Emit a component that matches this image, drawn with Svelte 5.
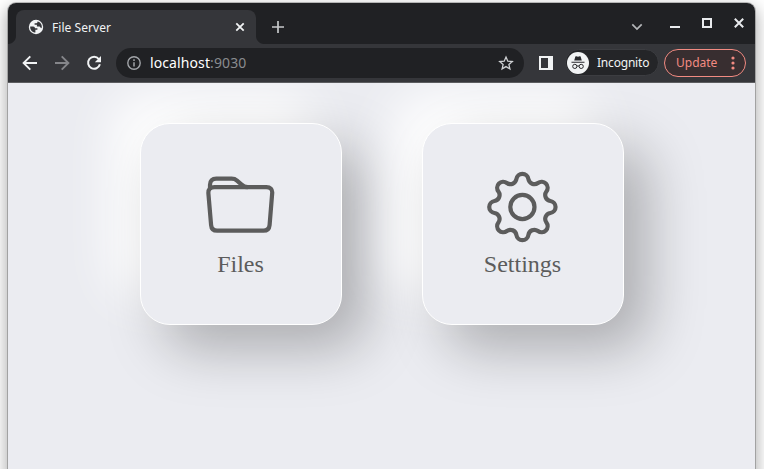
<script>
  const point = (radius, degrees) => {
    const a = (degrees * Math.PI) / 180;
    return [36 + radius * Math.sin(a), 36 - radius * Math.cos(a)];
  };
  const middle = (a, b) => `${((a[0] + b[0]) / 2).toFixed(2)} ${((a[1] + b[1]) / 2).toFixed(2)}`;
  const lobe = 27;
  const notch = 31.3;
  let gear = `M${middle(point(notch, -22.5), point(lobe, 0))}`;
  for (let i = 0; i < 8; i++) {
    const c = point(lobe, i * 45);
    const v = point(notch, i * 45 + 22.5);
    const n = point(lobe, i * 45 + 45);
    gear += `A6.05 6.05 0 0 1 ${middle(c, v)}A6.05 6.05 0 0 0 ${middle(v, n)}`;
  }
  gear += 'Z';
</script>

<div class="desktop">
  <div class="window">
    <header class="tabstrip">
      <div class="tab">
        <svg class="globe" width="16" height="16" viewBox="0 0 16 16">
          <circle cx="8" cy="8" r="7.2" fill="#f1f3f4" />
          <path d="M2.2 7.4H5.2Q7 7.6 7 9.3H9.4V10.8H7.4V13.6C4.2 13.4 1.9 10.6 2.2 7.4ZM9.4 2.4V3.2Q9.4 4.3 8.2 4.3H6.6V5.8H8.9V7.6H11.2Q12.2 7.7 12.6 8.8L13.6 9.2C14.6 6 12.6 3 9.4 2.4Z" fill="#35363a" />
        </svg>
        <span class="title">File Server</span>
        <svg width="10" height="10" viewBox="0 0 10 10"><path d="M1.3 1.3l7.4 7.4M8.7 1.3 1.3 8.7" stroke="#f1f3f4" stroke-width="1.8" /></svg>
      </div>
      <svg class="plus" width="12" height="12" viewBox="0 0 12 12"><path d="M6 0v12M0 6h12" stroke="#c6c8ca" stroke-width="1.7" /></svg>
      <div class="controls">
        <svg width="12" height="8" viewBox="0 0 12 8"><path d="M1.3 1.3 6 6l4.7-4.7" fill="none" stroke="#b4b6b9" stroke-width="1.7" /></svg>
        <svg class="min" width="10" height="10" viewBox="0 0 10 10"><path d="M0 8h10v2H0z" fill="#e8eaed" /></svg>
        <svg class="max" width="10" height="10" viewBox="0 0 10 10"><path d="M1 1h8v8H1z" fill="none" stroke="#e8eaed" stroke-width="2" /></svg>
        <svg class="close" width="10" height="10" viewBox="0 0 10 10"><path d="M.8.8l8.4 8.4M9.2.8.8 9.2" stroke="#e8eaed" stroke-width="2" /></svg>
      </div>
    </header>

    <div class="toolbar">
      <svg class="nav" width="16" height="16" viewBox="0 0 16 16"><path d="M15 8H2M8.3 1.3 1.6 8l6.7 6.7" fill="none" stroke="#f1f3f4" stroke-width="1.9" /></svg>
      <svg class="nav" width="16" height="16" viewBox="0 0 16 16"><path d="M1 8h13M7.7 1.3 14.4 8l-6.7 6.7" fill="none" stroke="#85868a" stroke-width="1.9" /></svg>
      <svg class="nav" width="16" height="16" viewBox="0 0 16 16">
        <path d="M12.8 4A6 6 0 1 0 13.9 9.3" fill="none" stroke="#f1f3f4" stroke-width="2" />
        <path d="M15 1v6.2H8.8z" fill="#f1f3f4" />
      </svg>
      <div class="address">
        <svg width="14" height="14" viewBox="0 0 14 14">
          <circle cx="7" cy="7" r="6.2" fill="none" stroke="#a2a5a9" stroke-width="1.4" />
          <path d="M7 6.2v4.2M7 3.3v1.6" stroke="#a2a5a9" stroke-width="1.5" />
        </svg>
        <span class="url">localhost<i>:9030</i></span>
        <svg width="16" height="16" viewBox="0 0 16 16"><path d="m8 2.1 1.8 4.1 4.5.4-3.4 3 1 4.3L8 11.6l-3.9 2.3 1-4.3-3.4-3 4.5-.4z" fill="none" stroke="#cfd1d4" stroke-width="1.3" /></svg>
      </div>
      <svg class="panel" width="14" height="14" viewBox="0 0 14 14"><path d="M0 0h14v14H0zM2 2v10h7V2z" fill="#f1f3f4" fill-rule="evenodd" /></svg>
      <div class="incognito">
        <svg width="22" height="22" viewBox="0 0 22 22">
          <circle cx="11" cy="11" r="11" fill="#f1f3f4" />
          <path d="M7.2 8.4 8.4 4.6Q8.6 4 9.2 4.2L11 4.7l1.8-.5q.6-.2.8.4L14.8 8.4zM4.5 9.7h13v1.1h-13z" fill="#28292c" />
          <g fill="none" stroke="#28292c" stroke-width="1"><circle cx="7.8" cy="14.4" r="2.1" /><circle cx="14.2" cy="14.4" r="2.1" /><path d="M9.9 14.2q1.1-.7 2.2 0" /></g>
        </svg>
        <span>Incognito</span>
      </div>
      <div class="update">
        <span>Update</span>
        <svg width="4" height="14" viewBox="0 0 4 14" fill="#f28b82"><circle cx="2" cy="2" r="1.6" /><circle cx="2" cy="7" r="1.6" /><circle cx="2" cy="12" r="1.6" /></svg>
      </div>
    </div>

    <main>
      <div class="card">
        <svg width="72" height="72" viewBox="0.7 0 72 72" fill="none" stroke="#5c5c5c" stroke-width="4.2">
          <path d="M10.2 16.2H62Q68.3 16.2 67.9 22L65.3 54Q64.8 59.7 59.1 59.7H12.9Q7.2 59.7 6.8 54L4.1 22.5Q3.7 16.2 10.2 16.2Z" />
          <path d="M5.7 18.5V13.8Q5.7 7.7 12 7.7H27.3Q30.5 7.7 32.7 9.6L37 13.4Q40 16.2 43.5 16.2" />
        </svg>
        <span>Files</span>
      </div>
      <div class="card">
        <svg width="72" height="72" viewBox="0.6 0 72 72" fill="none" stroke="#5c5c5c" stroke-width="4.2">
          <path d={gear} />
          <circle cx="36" cy="36" r="12.1" />
        </svg>
        <span>Settings</span>
      </div>
    </main>
  </div>
</div>

<style>
  .desktop {
    box-sizing: border-box;
    width: 764px;
    height: 469px;
    padding: 3px 9px 0 8px;
    overflow: hidden;
    background: #fff;
    font-family: "Noto Sans", sans-serif;
  }
  .window {
    width: 747px;
    height: 486px;
    border-radius: 8px 8px 0 0;
    overflow: hidden;
    background: #ebecf1;
    box-shadow: 0 0 0 1px rgba(0, 0, 0, .22), 0 6px 16px 2px rgba(0, 0, 0, .32);
  }
  .tabstrip {
    display: flex;
    height: 41px;
    padding-left: 8px;
    background: #202124;
  }
  .tab {
    position: relative;
    box-sizing: border-box;
    display: flex;
    align-items: center;
    width: 240px;
    height: 34px;
    margin-top: 7px;
    padding: 0 11px 0 12px;
    border-radius: 8px 8px 0 0;
    background: #35363a;
    color: #f1f3f4;
    font-size: 12px;
  }
  .tab::before,
  .tab::after {
    content: "";
    position: absolute;
    bottom: 0;
    width: 8px;
    height: 8px;
  }
  .tab::before {
    left: -8px;
    background: radial-gradient(circle at 0 0, #202124 7.5px, #35363a 8.5px);
  }
  .tab::after {
    right: -8px;
    background: radial-gradient(circle at 100% 0, #202124 7.5px, #35363a 8.5px);
  }
  .title {
    flex: 1;
    margin-left: 8px;
    letter-spacing: .06px;
  }
  .plus {
    margin: 18px 0 0 16px;
  }
  .controls {
    display: flex;
    align-items: center;
    height: 41px;
    margin-left: auto;
    padding-right: 11px;
  }
  .controls svg {
    margin-top: 6px;
  }
  .controls .min {
    margin: 0 0 1px 27px;
  }
  .controls .max,
  .controls .close {
    margin: 0 0 1px 22px;
  }
  .toolbar {
    box-sizing: border-box;
    display: flex;
    align-items: center;
    height: 39px;
    padding: 0 9px 1px 14px;
    border-bottom: 1px solid #5c5d60;
    background: #35363a;
  }
  .nav {
    margin-right: 16px;
  }
  .address {
    box-sizing: border-box;
    display: flex;
    align-items: center;
    width: 408px;
    height: 30px;
    margin-left: -2px;
    padding: 0 10px 0 11px;
    border-radius: 15px;
    background: #202124;
    font-size: 14px;
    color: #fff;
  }
  .url {
    flex: 1;
    margin-left: 9px;
    letter-spacing: .1px;
  }
  .url i {
    font-style: normal;
    color: #898b8f;
  }
  .panel {
    margin-left: 15px;
  }
  .incognito,
  .update {
    box-sizing: border-box;
    display: flex;
    align-items: center;
    height: 28px;
    border-radius: 14px;
    font-size: 12px;
  }
  .incognito {
    width: 94px;
    height: 27px;
    margin-left: 12px;
    padding-left: 1px;
    color: #f1f3f4;
    background: #242528;
    border: 1px solid #3c3d41;
    letter-spacing: -.2px;
  }
  .incognito svg {
    flex: none;
    margin-right: 8px;
  }
  .update {
    width: 82px;
    margin-left: 5px;
    padding: 0 10px 0 11px;
    justify-content: space-between;
    border: 1px solid #f28b82;
    background: #382e30;
    color: #f28b82;
  }
  main {
    display: flex;
    justify-content: center;
    gap: 80px;
    height: 406px;
    padding: 40px 0 0 1px;
    box-sizing: border-box;
    overflow: hidden;
    background: #ebecf1;
  }
  .card {
    box-sizing: border-box;
    display: flex;
    flex-direction: column;
    align-items: center;
    width: 202px;
    height: 202px;
    padding: 47px 1px 0 0;
    border: 1px solid #fff;
    border-radius: 30px;
    background: #ebecf1;
    box-shadow: 24px 24px 56px rgba(0, 0, 0, .27), -28px -28px 50px #fff;
    color: #5c5c5c;
    font: 24px/28px "Liberation Serif", serif;
  }
  .card svg {
    display: block;
    margin-bottom: 7px;
  }
</style>
